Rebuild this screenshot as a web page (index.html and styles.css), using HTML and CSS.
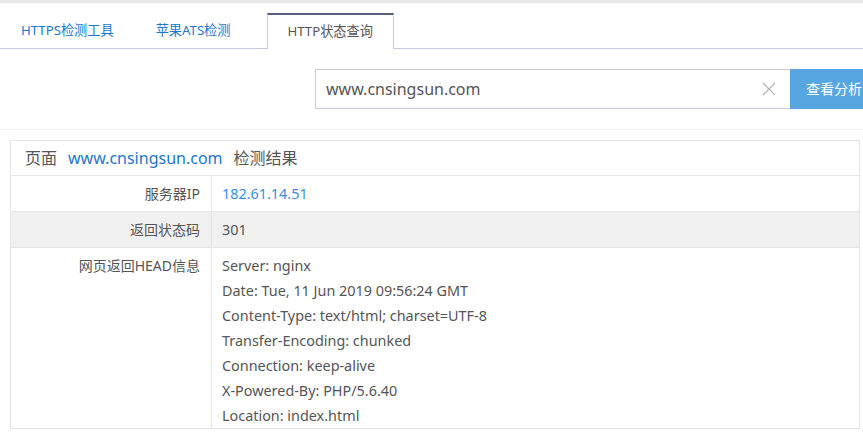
FILE: index.html
```html
<!DOCTYPE html>
<html lang="zh-CN">
<head>
<meta charset="utf-8">
<title>HTTP状态查询</title>
<link rel="stylesheet" href="styles.css">
</head>
<body>
<div class="topbar"></div>
<div class="tabs">
  <a class="tab">HTTPS检测工具</a>
  <a class="tab">苹果ATS检测</a>
  <a class="tab active">HTTP状态查询</a>
</div>
<div class="searchwrap">
  <div class="search">
    <div class="inputbox">
      <span class="inputtext">www.cnsingsun.com</span>
      <span class="clear">
        <svg width="14" height="14" viewBox="0 0 14 14"><path d="M1 1L13 13M13 1L1 13" stroke="#b5b5b5" stroke-width="1.2" fill="none"/></svg>
      </span>
    </div>
    <div class="btn">查看分析</div>
  </div>
</div>
<div class="divider"></div>
<div class="result">
  <div class="rhead">页面<span class="link">www.cnsingsun.com</span>检测结果</div>
  <div class="row">
    <div class="label">服务器IP</div>
    <div class="value ip">182.61.14.51</div>
  </div>
  <div class="row gray">
    <div class="label">返回状态码</div>
    <div class="value">301</div>
  </div>
  <div class="row">
    <div class="label">网页返回HEAD信息</div>
    <div class="value lines">
      <div>Server: nginx</div>
      <div>Date: Tue, 11 Jun 2019 09:56:24 GMT</div>
      <div>Content-Type: text/html; charset=UTF-8</div>
      <div>Transfer-Encoding: chunked</div>
      <div>Connection: keep-alive</div>
      <div>X-Powered-By: PHP/5.6.40</div>
      <div>Location: index.html</div>
    </div>
  </div>
</div>
</body>
</html>
```

FILE: styles.css
```css
* { box-sizing: border-box; }
html, body { margin: 0; padding: 0; background: #fff; overflow: hidden; }
body {
  font-family: "Noto Sans", "Noto Sans CJK SC", sans-serif;
  color: #555;
  font-size: 14px;
}
.topbar { height: 3px; background: #e8e8e8; }
.tabs {
  display: flex;
  margin-top: 10px;
  height: 36px;
  border-bottom: 1px solid #c6cce0;
}
.tab {
  display: block;
  height: 36px;
  line-height: 34px;
  font-size: 13.2px;
  color: #1b78d0;
  padding: 0 21px;
}
.tab.active {
  color: #555;
  border-top: 2px solid #55617d;
  border-left: 1px solid #c6cce0;
  border-right: 1px solid #c6cce0;
  background: #fff;
  line-height: 32px;
  margin-left: 15px;
  padding: 0 20px;
}
.searchwrap { overflow: hidden; }
.search {
  display: flex;
  margin-top: 20px;
  height: 40px;
  padding-left: 315px;
  width: 923px;
}
.inputbox {
  width: 475px;
  height: 40px;
  border: 1px solid #c6cce0;
  border-right: none;
  display: flex;
  align-items: center;
  padding-left: 10px;
}
.inputtext { flex: 1; font-size: 16px; color: #555; }
.clear { width: 40px; display: flex; align-items: center; justify-content: center; padding-right: 2px; }
.clear svg { display: block; }
.btn {
  width: 133px;
  height: 40px;
  background: #58a6e1;
  color: #fff;
  font-size: 14px;
  line-height: 40px;
  padding-left: 16px;
}
.divider { height: 1px; background: #f0f0f0; margin-top: 20px; }
.result {
  margin: 10px 3px 0 10px;
  border: 1px solid #e4e4e4;
  border-bottom: none;
}
.rhead {
  height: 35px;
  line-height: 34px;
  padding-left: 14px;
  font-size: 16px;
  color: #555;
  border-bottom: 1px solid #e4e4e4;
}
.rhead .link { color: #1f76c8; margin: 0 11px; }
.row {
  display: flex;
  border-bottom: 1px solid #e4e4e4;
}
.row.gray { background: #f0f0f0; }
.label {
  width: 201px;
  flex: none;
  text-align: right;
  padding-right: 11px;
  font-size: 14px;
  line-height: 35px;
  border-right: 1px solid #e4e4e4;
}
.value {
  flex: 1;
  padding-left: 10px;
  line-height: 35px;
  font-size: 14.4px;
}
.value.ip { color: #3a8ee6; }
.value.lines { padding-top: 5px; line-height: 25px; }
.row:last-child .label { line-height: 36px; }
```
